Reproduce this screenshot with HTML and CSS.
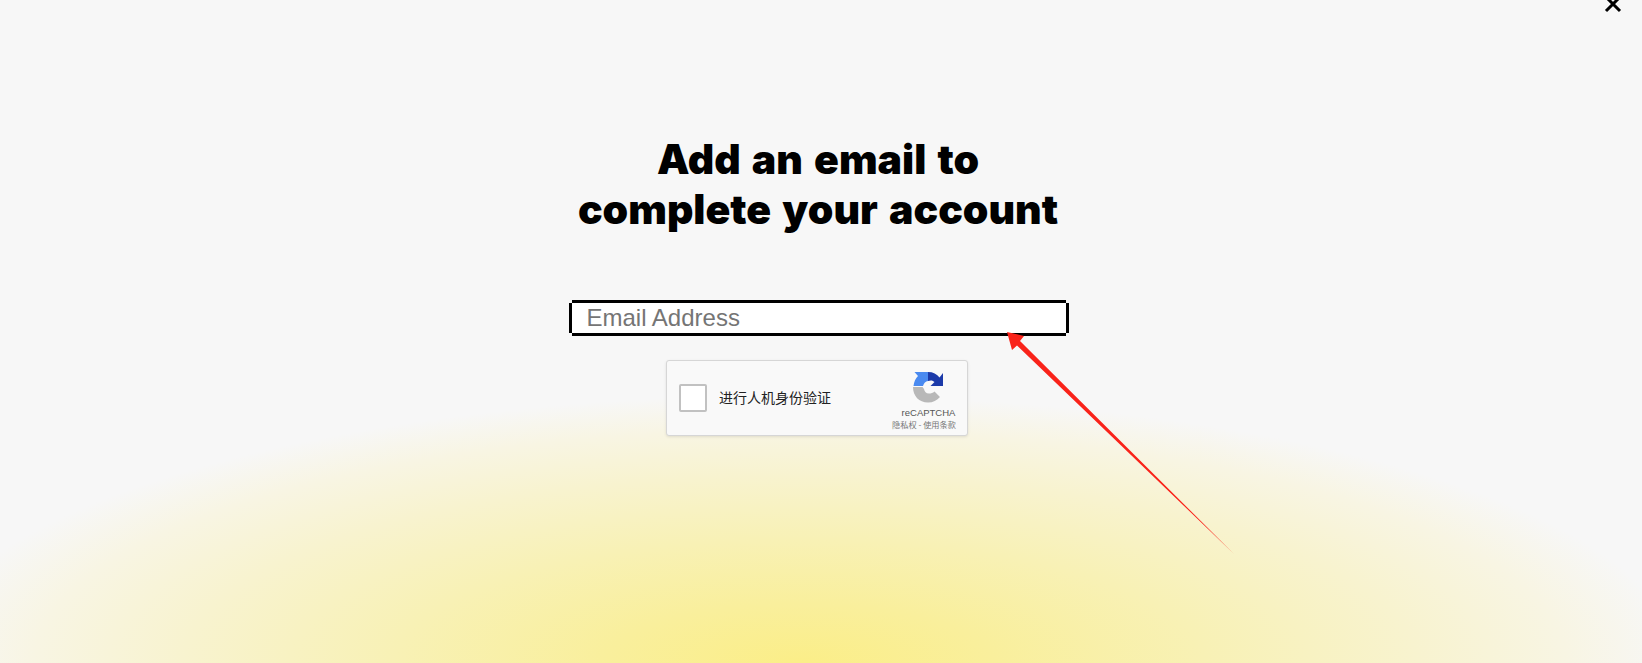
FILE: index.html
```html
<!DOCTYPE html>
<html lang="en">
<head>
<meta charset="utf-8">
<title>Add an email</title>
<link rel="stylesheet" href="styles.css">
</head>
<body>
<main class="page">
  <button class="close" aria-label="Close">
    <svg width="18" height="18" viewBox="0 0 18 18"><path d="M2 2 16 16M16 2 2 16" stroke="#000" stroke-width="3" fill="none"/></svg>
  </button>
  <h1 class="title">Add an email to<br>complete your account</h1>
  <input class="email" type="email" placeholder="Email Address">
  <div class="captcha">
    <span class="check"></span>
    <span class="label">进行人机身份验证</span>
    <div class="brand">
      <svg class="logo" width="32" height="32" viewBox="0 0 32 32">
        <path d="M16 1C21 1 25 3 27.500 6.500L31 2V15H18.500L22.500 11C21 9.500 19 9 16 10Z" fill="#1c3aa9"/>
        <path d="M16 1V10C13.500 10.500 12 12 11 15H1.500C2 10.500 3.500 7.500 6 5L2.500 1Z" fill="#4a8af0"/>
        <path d="M1 16H10.500L12 18C12.500 20.500 14 22.500 17 22.500C19 22.500 21 22 22.500 20.500L28 26C25 29.500 21 31.500 16 31.500C7 31.500 1 25 1 16Z" fill="#b8b8b8"/>
      </svg>
      <span class="name">reCAPTCHA</span>
      <span class="terms">隐私权 - 使用条款</span>
    </div>
  </div>
  <svg class="arrow" width="242" height="238" viewBox="0 0 242 238">
    <path d="M8 8 25 12 21 17 235 230 18 21.500 13 26Z" fill="#f9231a"/>
  </svg>
</main>
</body>
</html>
```
FILE: styles.css
```css
html, body {
  margin: 0;
  height: 100%;
}
.page {
  position: relative;
  height: 663px;
  overflow: hidden;
  box-sizing: border-box;
  padding-top: 134px;
  display: flex;
  flex-direction: column;
  align-items: center;
  background-color: #f7f7f7;
  background-image: radial-gradient(ellipse 880px 268px at 800px 663px, #fbee88 0%, #f9ef9c 22%, #f8f1b5 46%, #f8f3cf 70%, #f8f5e3 87%, #f7f7f7 100%);
}
.close {
  position: absolute;
  top: -5px;
  left: 1604px;
  padding: 0;
  border: 0;
  background: none;
  line-height: 0;
}
.title {
  margin: 0 0 0 -6px;
  font: 900 41px/50px Inter, "Liberation Sans", sans-serif;
  word-spacing: 3px;
  text-align: center;
  color: #000;
}
.email {
  width: 494px;
  height: 30px;
  box-sizing: border-box;
  margin: 69px 0 3px -5px;
  padding: 0 15px;
  border: 0;
  border-radius: 0;
  background: #fff;
  box-shadow: 3px 0 #000, -3px 0 #000, 0 3px #000, 0 -3px #000;
  font: 24px "Liberation Sans", Arial, sans-serif;
  outline: 0;
}
.email::placeholder {
  color: #757575;
  opacity: 1;
}
.captcha {
  display: flex;
  align-items: center;
  width: 302px;
  height: 76px;
  box-sizing: border-box;
  margin: 24px 0 0 -8px;
  padding-left: 12px;
  border: 1px solid #d6d6d6;
  border-radius: 3px;
  background: #f9f9f9;
  box-shadow: 0 1px 3px rgba(0, 0, 0, .1);
}
.check {
  width: 28px;
  height: 28px;
  flex: none;
  box-sizing: border-box;
  border: 2px solid #c1c1c1;
  border-radius: 2px;
  background: #fff;
}
.label {
  margin: -2px 0 0 12px;
  font: 14px "Noto Sans CJK SC", sans-serif;
  color: #222;
  white-space: nowrap;
}
.brand {
  display: flex;
  flex-direction: column;
  align-items: center;
  width: 70px;
  margin-left: auto;
  margin-right: 8px;
  padding-top: 4px;
}
.logo {
  display: block;
  margin-left: 8px;
}
.name {
  margin: 4px 0 0 9px;
  font: 9.500px/12px "Liberation Sans", Arial, sans-serif;
  color: #555;
}
.terms {
  margin-top: -1px;
  font: 8.200px/12px "Noto Sans CJK SC", sans-serif;
  color: #777;
  white-space: nowrap;
}
.arrow {
  position: absolute;
  left: 999px;
  top: 324px;
}
```
